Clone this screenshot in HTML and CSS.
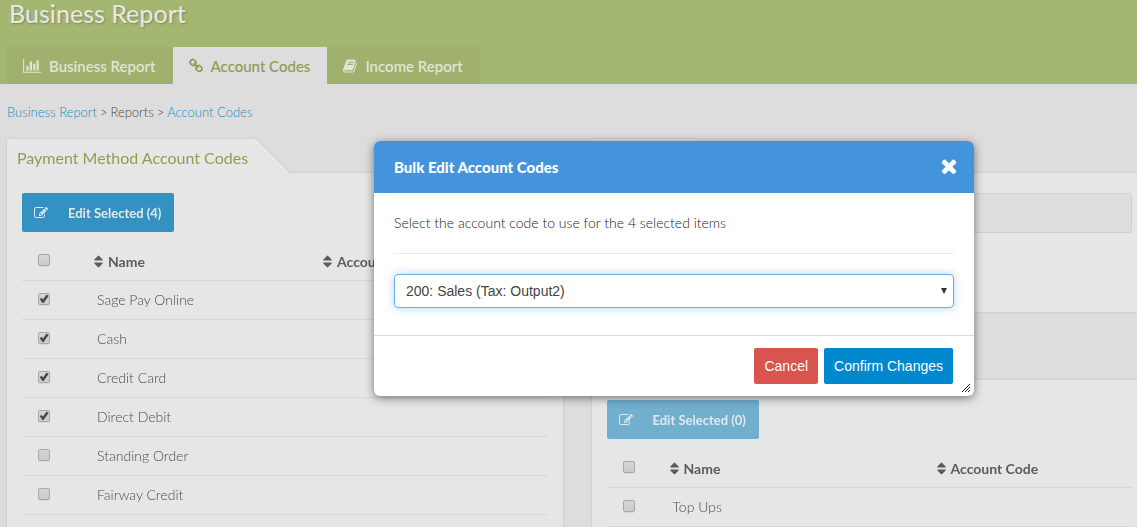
FILE: index.html
```
<!DOCTYPE html>
<html lang="en">
<head>
<meta charset="utf-8">
<title>Business Report</title>
<link rel="stylesheet" href="styles.css">
</head>
<body>
<svg class="sprite" aria-hidden="true">
  <symbol id="i-chart" viewBox="0 0 2048 1792"><path d="M640 896v512h-256v-512h256zm384-512v1024h-256v-1024h256zm1024 1152v128h-2048v-1536h128v1408h1920zm-640-896v768h-256v-768h256zm384-384v1152h-256v-1152h256z"/></symbol>
  <symbol id="i-link" viewBox="64 0 1664 1792"><path d="M1520 1216q0-40-28-68l-208-208q-28-28-68-28-42 0-72 32 3 3 19 18.500t21.500 21.500 15 19 13 25.500 3.500 27.500q0 40-28 68t-68 28q-15 0-27.500-3.500t-25.500-13-19-15-21.500-21.500-18.500-19q-33 31-33 73 0 40 28 68l206 207q27 27 68 27 40 0 68-26l147-146q28-28 28-67zm-703-705q0-40-28-68l-206-207q-28-28-68-28-39 0-68 27l-147 146q-28 28-28 67 0 40 28 68l208 208q27 27 68 27 42 0 72-31-3-3-19-18.500t-21.500-21.500-15-19-13-25.500-3.500-27.500q0-40 28-68t68-28q15 0 27.500 3.500t25.500 13 19 15 21.500 21.500 18.500 19q33-31 33-73zm895 705q0 120-85 203l-147 146q-83 83-203 83-121 0-204-85l-206-207q-83-83-83-203 0-123 88-209l-88-88q-86 88-208 88-120 0-204-84l-208-208q-84-84-84-204t85-203l147-146q83-83 203-83 121 0 204 85l206 207q83 83 83 203 0 123-88 209l88 88q86-88 208-88 120 0 204 84l208 208q84 84 84 204z"/></symbol>
  <symbol id="i-book" viewBox="64 0 1664 1792"><path d="M1703 478q40 57 18 129l-275 906q-19 64-76.500 107.500t-122.500 43.500h-923q-77 0-148.500-53.500t-99.500-131.500q-24-67-2-127 0-4 3-27t4-37q1-8-3-21.500t-3-19.500q2-11 8-21t16.500-23.500 16.500-23.500q23-38 45-91.500t30-91.500q3-10 .5-30t-.5-28q3-11 17-28t17-23q21-36 42-92t25-90q1-9-2.500-32t.5-28q4-13 22-30.500t22-22.500q19-26 42.500-84.500t27.500-96.500q1-8-3-25.500t-2-26.500q2-8 9-18t18-23 17-21q8-12 16.500-30.500t15-35 16-36 19.500-32 26.500-23.500 36-11.500 47.500 5.500l-1 3q38-9 51-9h761q74 0 114 56t18 130l-274 906q-36 119-71.500 153.500t-128.500 34.500h-869q-27 0-38 15-11 16-1 43 24 70 144 70h923q29 0 56-15.500t35-41.500l300-987q7-22 5-57 38 15 59 43zm-1064 2q-4 13 2 22.500t20 9.500h608q13 0 25.500-9.500t16.500-22.500l21-64q4-13-2-22.500t-20-9.500h-608q-13 0-25.500 9.500t-16.500 22.500zm-83 256q-4 13 2 22.500t20 9.500h608q13 0 25.500-9.500t16.500-22.500l21-64q4-13-2-22.500t-20-9.500h-608q-13 0-25.500 9.500t-16.500 22.500z"/></symbol>
  <symbol id="i-edit" viewBox="0 0 1792 1792"><path d="M888 1184l116-116-152-152-116 116v56h96v96h56zm440-720q-16-16-33 1l-350 350q-17 17-1 33t33-1l350-350q17-17 1-33zm80 594v190q0 119-84.500 203.500t-203.500 84.500h-832q-119 0-203.500-84.500t-84.500-203.500v-832q0-119 84.500-203.500t203.500-84.500h832q63 0 117 25 15 7 18 23 3 17-9 29l-49 49q-14 14-32 8-23-6-45-6h-832q-66 0-113 47t-47 113v832q0 66 47 113t113 47h832q66 0 113-47t47-113v-126q0-13 9-22l64-64q15-15 35-7t20 29zm-96-738l288 288-672 672h-288v-288zm444 132l-92 92-288-288 92-92q28-28 68-28t68 28l152 152q28 28 28 68t-28 68z"/></symbol>
  <symbol id="i-sort" viewBox="384 0 1024 1792"><path d="M1408 1088q0 26-19 45l-448 448q-19 19-45 19t-45-19l-448-448q-19-19-19-45t19-45 45-19h896q26 0 45 19t19 45zm0-384q0 26-19 45t-45 19h-896q-26 0-45-19t-19-45 19-45l448-448q19-19 45-19t45 19l448 448q19 19 19 45z"/></symbol>
  <symbol id="i-times" viewBox="302 0 1188 1792"><path d="M1490 1322q0 40-28 68l-136 136q-28 28-68 28t-68-28l-294-294-294 294q-28 28-68 28t-68-28l-136-136q-28-28-28-68t28-68l294-294-294-294q-28-28-28-68t28-68l136-136q28-28 68-28t68 28l294 294 294-294q28-28 68-28t68 28l136 136q28 28 28 68t-28 68l-294 294 294 294q28 28 28 68z"/></symbol>
</svg>

<header class="banner">
  <h1 class="title">Business Report</h1>
  <nav class="tabs" aria-label="Reports">
    <a class="tab" href="#report"><svg class="icon icon-wide"><use href="#i-chart"/></svg>Business Report</a>
    <a class="tab tab-active" href="#codes" aria-current="page"><svg class="icon"><use href="#i-link"/></svg>Account Codes</a>
    <a class="tab" href="#income"><svg class="icon"><use href="#i-book"/></svg>Income Report</a>
  </nav>
</header>

<nav class="crumbs" aria-label="Breadcrumb"><a href="#report">Business Report</a><span>&gt;</span><span>Reports</span><span>&gt;</span><a href="#codes">Account Codes</a></nav>

<main class="columns">
  <section class="card">
    <h2 class="card-tab">Payment Method Account Codes</h2>
    <div class="card-body">
      <button class="edit" type="button"><svg class="edit-icon"><use href="#i-edit"/></svg>Edit Selected (4)</button>
      <table class="codes">
        <colgroup><col class="col-check"><col class="col-name"><col></colgroup>
        <thead><tr><th><input type="checkbox" aria-label="Select all payment methods"></th><th><svg class="sort"><use href="#i-sort"/></svg>Name</th><th><svg class="sort"><use href="#i-sort"/></svg>Account Code</th></tr></thead>
        <tbody>
          <tr><td><input type="checkbox" id="sage" checked></td><td><label for="sage">Sage Pay Online</label></td><td></td></tr>
          <tr><td><input type="checkbox" id="cash" checked></td><td><label for="cash">Cash</label></td><td></td></tr>
          <tr><td><input type="checkbox" id="card" checked></td><td><label for="card">Credit Card</label></td><td></td></tr>
          <tr><td><input type="checkbox" id="debit" checked></td><td><label for="debit">Direct Debit</label></td><td></td></tr>
          <tr><td><input type="checkbox" id="standing"></td><td><label for="standing">Standing Order</label></td><td></td></tr>
          <tr><td><input type="checkbox" id="fairway"></td><td><label for="fairway">Fairway Credit</label></td><td></td></tr>
        </tbody>
      </table>
    </div>
  </section>

  <div class="stack">
    <section class="card card-short">
      <div class="card-tab card-tab-small"></div>
      <div class="card-body"><div class="well"></div></div>
    </section>
    <section class="card">
      <div class="card-tab card-tab-small"></div>
      <div class="card-body">
        <button class="edit" type="button" disabled><svg class="edit-icon"><use href="#i-edit"/></svg>Edit Selected (0)</button>
        <table class="codes">
          <colgroup><col class="col-check-narrow"><col class="col-name-wide"><col></colgroup>
          <thead><tr><th><input type="checkbox" aria-label="Select all items"></th><th><svg class="sort"><use href="#i-sort"/></svg>Name</th><th><svg class="sort"><use href="#i-sort"/></svg>Account Code</th></tr></thead>
          <tbody><tr><td><input type="checkbox" id="topups"></td><td><label for="topups">Top Ups</label></td><td></td></tr></tbody>
        </table>
      </div>
    </section>
  </div>
</main>

<div class="modal" role="dialog" aria-labelledby="modal-title">
  <div class="modal-head">
    <h2 class="modal-title" id="modal-title">Bulk Edit Account Codes</h2>
    <button class="close" type="button" aria-label="Close"><svg class="close-icon"><use href="#i-times"/></svg></button>
  </div>
  <div class="modal-body">
    <label class="prompt" for="code">Select the account code to use for the 4 selected items</label>
    <div class="picker">
      <select class="select" id="code"><option>200: Sales (Tax: Output2)</option></select>
    </div>
  </div>
  <div class="modal-foot">
    <button class="btn btn-cancel" type="button">Cancel</button>
    <button class="btn btn-confirm" type="button">Confirm Changes</button>
  </div>
  <svg class="grip" viewBox="0 0 8 8" aria-hidden="true"><path d="M0 8L8 0M3 8L8 3M6 8L8 6"/></svg>
</div>
</body>
</html>
```
FILE: styles.css
```
* { box-sizing: border-box; }

body {
  margin: 0;
  min-height: 100vh;
  overflow: hidden;
  background: #ddd;
  color: #4c4c4c;
  font: 300 14px/20px Lato, sans-serif;
}

h1, h2 { margin: 0; }
a { text-decoration: none; }
svg { fill: currentColor; flex: none; }
.sprite { display: none; }

/* Page banner */
.banner { background: #a4b770; }

.title {
  height: 47px;
  padding: 0 9px;
  color: #e6e6e6;
  font-size: 25px;
  font-weight: 500;
  line-height: 26px;
  text-shadow: 1px 1px 2px rgba(0, 0, 0, .25);
}

.tabs { display: flex; padding-left: 7px; }

.tab {
  display: flex;
  align-items: center;
  gap: 8px;
  height: 37px;
  padding: 1px 17px 0 16px;
  background: #9fb16d;
  color: #e1e5d6;
  font-size: 15px;
  font-weight: 600;
}

.tab-active { background: #ddd; color: #8a9c50; font-weight: 500; }
.icon { width: 14px; height: 16px; }
.icon-wide { width: 18px; }

.crumbs {
  display: flex;
  gap: 3px;
  padding: 18px 7px 17px;
  font-size: 13px;
}

.crumbs a { color: #1f8cc2; }

/* Cards */
.columns {
  display: grid;
  grid-template-columns: 1fr 1fr;
  gap: 29px;
  margin: 0 -10px 0 7px;
}

.card { filter: drop-shadow(0 0 1px rgba(0, 0, 0, .14)); }
.stack { display: flex; flex-direction: column; gap: 34px; }

.card-tab {
  width: fit-content;
  height: 34px;
  padding: 9px 42px 0 10px;
  background: #e6e6e6;
  color: #8f9f52;
  font-size: 16px;
  font-weight: 400;
  clip-path: polygon(0 0, calc(100% - 34px) 0, 100% 100%, 0 100%);
}

.card-tab-small { width: 138px; }
.card-body { padding: 20px 15px; background: #e6e6e6; }
.card-short .card-body { height: 139px; }

.well {
  height: 40px;
  border: 1px solid #d0d0d0;
  border-radius: 3px;
  background: #dedede;
}

.edit {
  display: flex;
  align-items: center;
  height: 39px;
  padding: 0 13px 0 12px;
  border: 0;
  border-radius: 2px;
  background: #3492c3;
  color: #e1e8ec;
  font: 700 13px/20px Lato, sans-serif;
}

.edit:disabled { background: #71afcf; }
.edit-icon { width: 14px; height: 14px; margin-right: 20px; }

.codes {
  width: 100%;
  margin-top: 10px;
  border-collapse: separate;
  border-spacing: 0;
  table-layout: fixed;
}

.codes th, .codes td {
  height: 39px;
  padding: 0 5px;
  border-bottom: 1px solid #d8d8d8;
  text-align: left;
}

.codes th { padding-top: 2px; color: #5c5c5c; font-weight: 700; }
.codes td { padding-left: 8px; }
.codes th:first-child, .codes td:first-child { padding: 0 0 0 16px; }
.col-check { width: 67px; }
.col-name { width: 229px; }
.col-check-narrow { width: 58px; }
.col-name-wide { width: 267px; }

.sort {
  width: 9px;
  height: 15px;
  margin-right: 5px;
  vertical-align: -2px;
}

.codes input {
  display: block;
  appearance: none;
  width: 12px;
  height: 12px;
  margin: 0 0 2px;
  border: 1px solid #a8a8a8;
  border-radius: 2px;
  background: linear-gradient(#d6d6d6, #cbcbcb);
  box-shadow: 0 1px 0 rgba(0, 0, 0, .06);
}

.codes input:checked::before {
  content: "";
  display: block;
  width: 10px;
  height: 10px;
  background: #484848;
  clip-path: polygon(8% 52%, 24% 38%, 40% 55%, 76% 6%, 96% 20%, 46% 90%, 34% 90%);
}

/* Dialog */
.modal {
  position: absolute;
  top: 141px;
  left: 374px;
  width: 600px;
  border-radius: 6px;
  background: #fff;
  box-shadow: 0 2px 10px rgba(0, 0, 0, .5);
}

.modal-head {
  display: flex;
  align-items: center;
  justify-content: space-between;
  height: 52px;
  padding: 0 17px 0 20px;
  border-radius: 6px 6px 0 0;
  background: #4494dd;
  color: #fff;
}

.modal-title { font-size: 15px; font-weight: 900; }

.close {
  display: flex;
  padding: 0 0 3px;
  border: 0;
  background: none;
  color: #fff;
}

.close-icon { width: 16px; height: 22px; }
.modal-body { padding: 20px 20px 27px; color: #222; }

.prompt {
  display: block;
  padding-bottom: 20px;
  border-bottom: 1px solid #eaeaea;
}

.picker { position: relative; margin-top: 20px; }

.picker::after {
  content: "";
  position: absolute;
  top: 14px;
  right: 7px;
  width: 6px;
  height: 6px;
  background: #333;
  clip-path: polygon(0 0, 100% 0, 50% 100%);
}

.select {
  display: block;
  appearance: none;
  width: 100%;
  height: 34px;
  padding: 0 11px;
  border: 1px solid #66afe9;
  border-radius: 4px;
  background: #fff;
  box-shadow: 0 0 8px rgba(102, 175, 233, .5);
  color: #444;
  font: 14px/20px "Liberation Sans", Arial, sans-serif;
}

.modal-foot {
  display: flex;
  justify-content: flex-end;
  gap: 6px;
  padding: 12px 21px;
  border-top: 1px solid #ddd;
}

.btn {
  height: 36px;
  padding: 0 10px;
  border: 0;
  border-radius: 2px;
  color: #fff;
  font: 14px/20px "Liberation Sans", Arial, sans-serif;
}

.btn-cancel { background: #d9534f; }
.btn-confirm { background: #0088cf; }

.grip {
  position: absolute;
  right: 4px;
  bottom: 4px;
  width: 8px;
  height: 8px;
  stroke: #222;
}
```
